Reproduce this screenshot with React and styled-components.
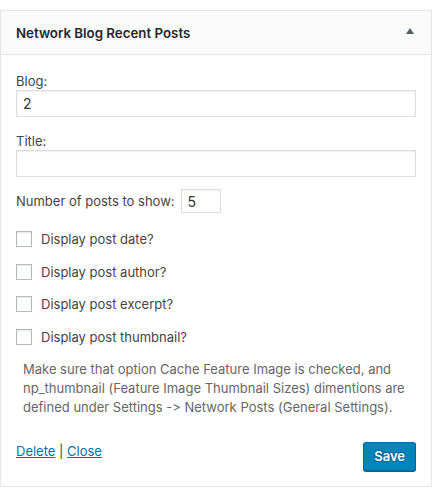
import React from "react";
import styled, { createGlobalStyle } from "styled-components";

const GlobalStyle = createGlobalStyle`
  html, body { margin: 0; padding: 0; background: #fff; }
  body {
    font-family: Inter, "Liberation Sans", Arial, sans-serif;
    font-size: 13px;
    color: #444;
    font-feature-settings: "calt" 0, "liga" 0;
  }
  * { box-sizing: border-box; }
`;

const Widget = styled.div`
  margin-top: 10px;
  width: 432px;
  background: #fff;
  border: 1px solid #e5e5e5;
  box-shadow: 0 1px 1px rgba(0, 0, 0, 0.04);
`;

const Header = styled.div`
  height: 44px;
  display: flex;
  align-items: center;
  justify-content: space-between;
  padding: 0 17px 0 15px;
  background: #fafafa;
  border-bottom: 1px solid #e5e5e5;
`;

const Title = styled.h3`
  margin: 0;
  font-size: 13.3px;
  font-weight: 600;
  color: #23282d;
  line-height: 18px;
`;

const Toggle = styled.svg`
  width: 8px;
  height: 6px;
  display: block;
  margin-top: -3px;
`;

const Body = styled.div`
  padding: 17px 15px 15px 15px;
`;

const Field = styled.div`
  margin-top: ${(p) => p.$gap || 0}px;
`;

const Label = styled.label`
  display: block;
  line-height: 18px;
`;

const TextInput = styled.input`
  display: block;
  width: 100%;
  height: 27px;
  margin: 0;
  padding: 2px 6px;
  font: inherit;
  font-size: 14px;
  color: #32373c;
  border: 1px solid #ddd;
  border-radius: 0;
  box-shadow: inset 0 1px 2px rgba(0, 0, 0, 0.07);
  background: #fff;
  outline: none;
`;

const NumberRow = styled.div`
  margin-top: 12px;
  display: flex;
  align-items: center;
  gap: 6px;
`;

const SmallInput = styled(TextInput)`
  width: 40px;
  height: 24px;
  padding: 1px 6px;
`;

const CheckRow = styled.label`
  margin-top: ${(p) => p.$gap}px;
  display: flex;
  align-items: center;
  height: 16px;
  gap: 9px;
  line-height: 18px;
`;

const Box = styled.span`
  width: 16px;
  height: 16px;
  flex: none;
  border: 1px solid #b4b9be;
  background: #fff;
  box-shadow: inset 0 1px 2px rgba(0, 0, 0, 0.1);
`;

const Help = styled.p`
  margin: 15px 0 0 0;
  padding: 0 8px 0 7px;
  line-height: 19px;
  color: #666;
`;

const Footer = styled.div`
  margin-top: 25px;
  display: flex;
  justify-content: space-between;
  align-items: flex-start;
`;

const Links = styled.div`
  line-height: 18px;
  color: #444;
`;

const Link = styled.a`
  color: #0073aa;
  text-decoration: underline;
  cursor: pointer;
`;

const SaveButton = styled.button`
  height: 29px;
  padding: 0 10px 1px;
  font: inherit;
  font-size: 13px;
  font-weight: 600;
  color: #fff;
  background: #0085ba;
  border: 1px solid;
  border-color: #0073aa #006799 #006799;
  border-radius: 3px;
  box-shadow: 0 1px 0 #006799;
  text-shadow: 0 -1px 1px #006799, 1px 0 1px #006799, 0 1px 1px #006799, -1px 0 1px #006799;
  cursor: pointer;
`;

const checks = [
  "Display post date?",
  "Display post author?",
  "Display post excerpt?",
  "Display post thumbnail?",
];

export default function App() {
  return (
    <>
      <GlobalStyle />
      <Widget>
        <Header>
          <Title>Network Blog Recent Posts</Title>
          <Toggle viewBox="0 0 8 6">
            <polygon points="0,6 4,0 8,6" fill="#555d66" />
          </Toggle>
        </Header>
        <Body>
          <Field>
            <Label>Blog:</Label>
            <TextInput defaultValue="2" />
          </Field>
          <Field $gap={15}>
            <Label>Title:</Label>
            <TextInput defaultValue="" />
          </Field>
          <NumberRow>
            <span>Number of posts to show:</span>
            <SmallInput defaultValue="5" />
          </NumberRow>
          {checks.map((c, i) => (
            <CheckRow key={c} $gap={i === 0 ? 18 : 16.7}>
              <Box />
              <span>{c}</span>
            </CheckRow>
          ))}
          <Help>
            Make sure that option Cache Feature Image is checked, and
            np_thumbnail (Feature Image Thumbnail Sizes) dimentions are defined
            under Settings -&gt; Network Posts (General Settings).
          </Help>
          <Footer>
            <Links>
              <Link>Delete</Link> | <Link>Close</Link>
            </Links>
            <SaveButton>Save</SaveButton>
          </Footer>
        </Body>
      </Widget>
    </>
  );
}
